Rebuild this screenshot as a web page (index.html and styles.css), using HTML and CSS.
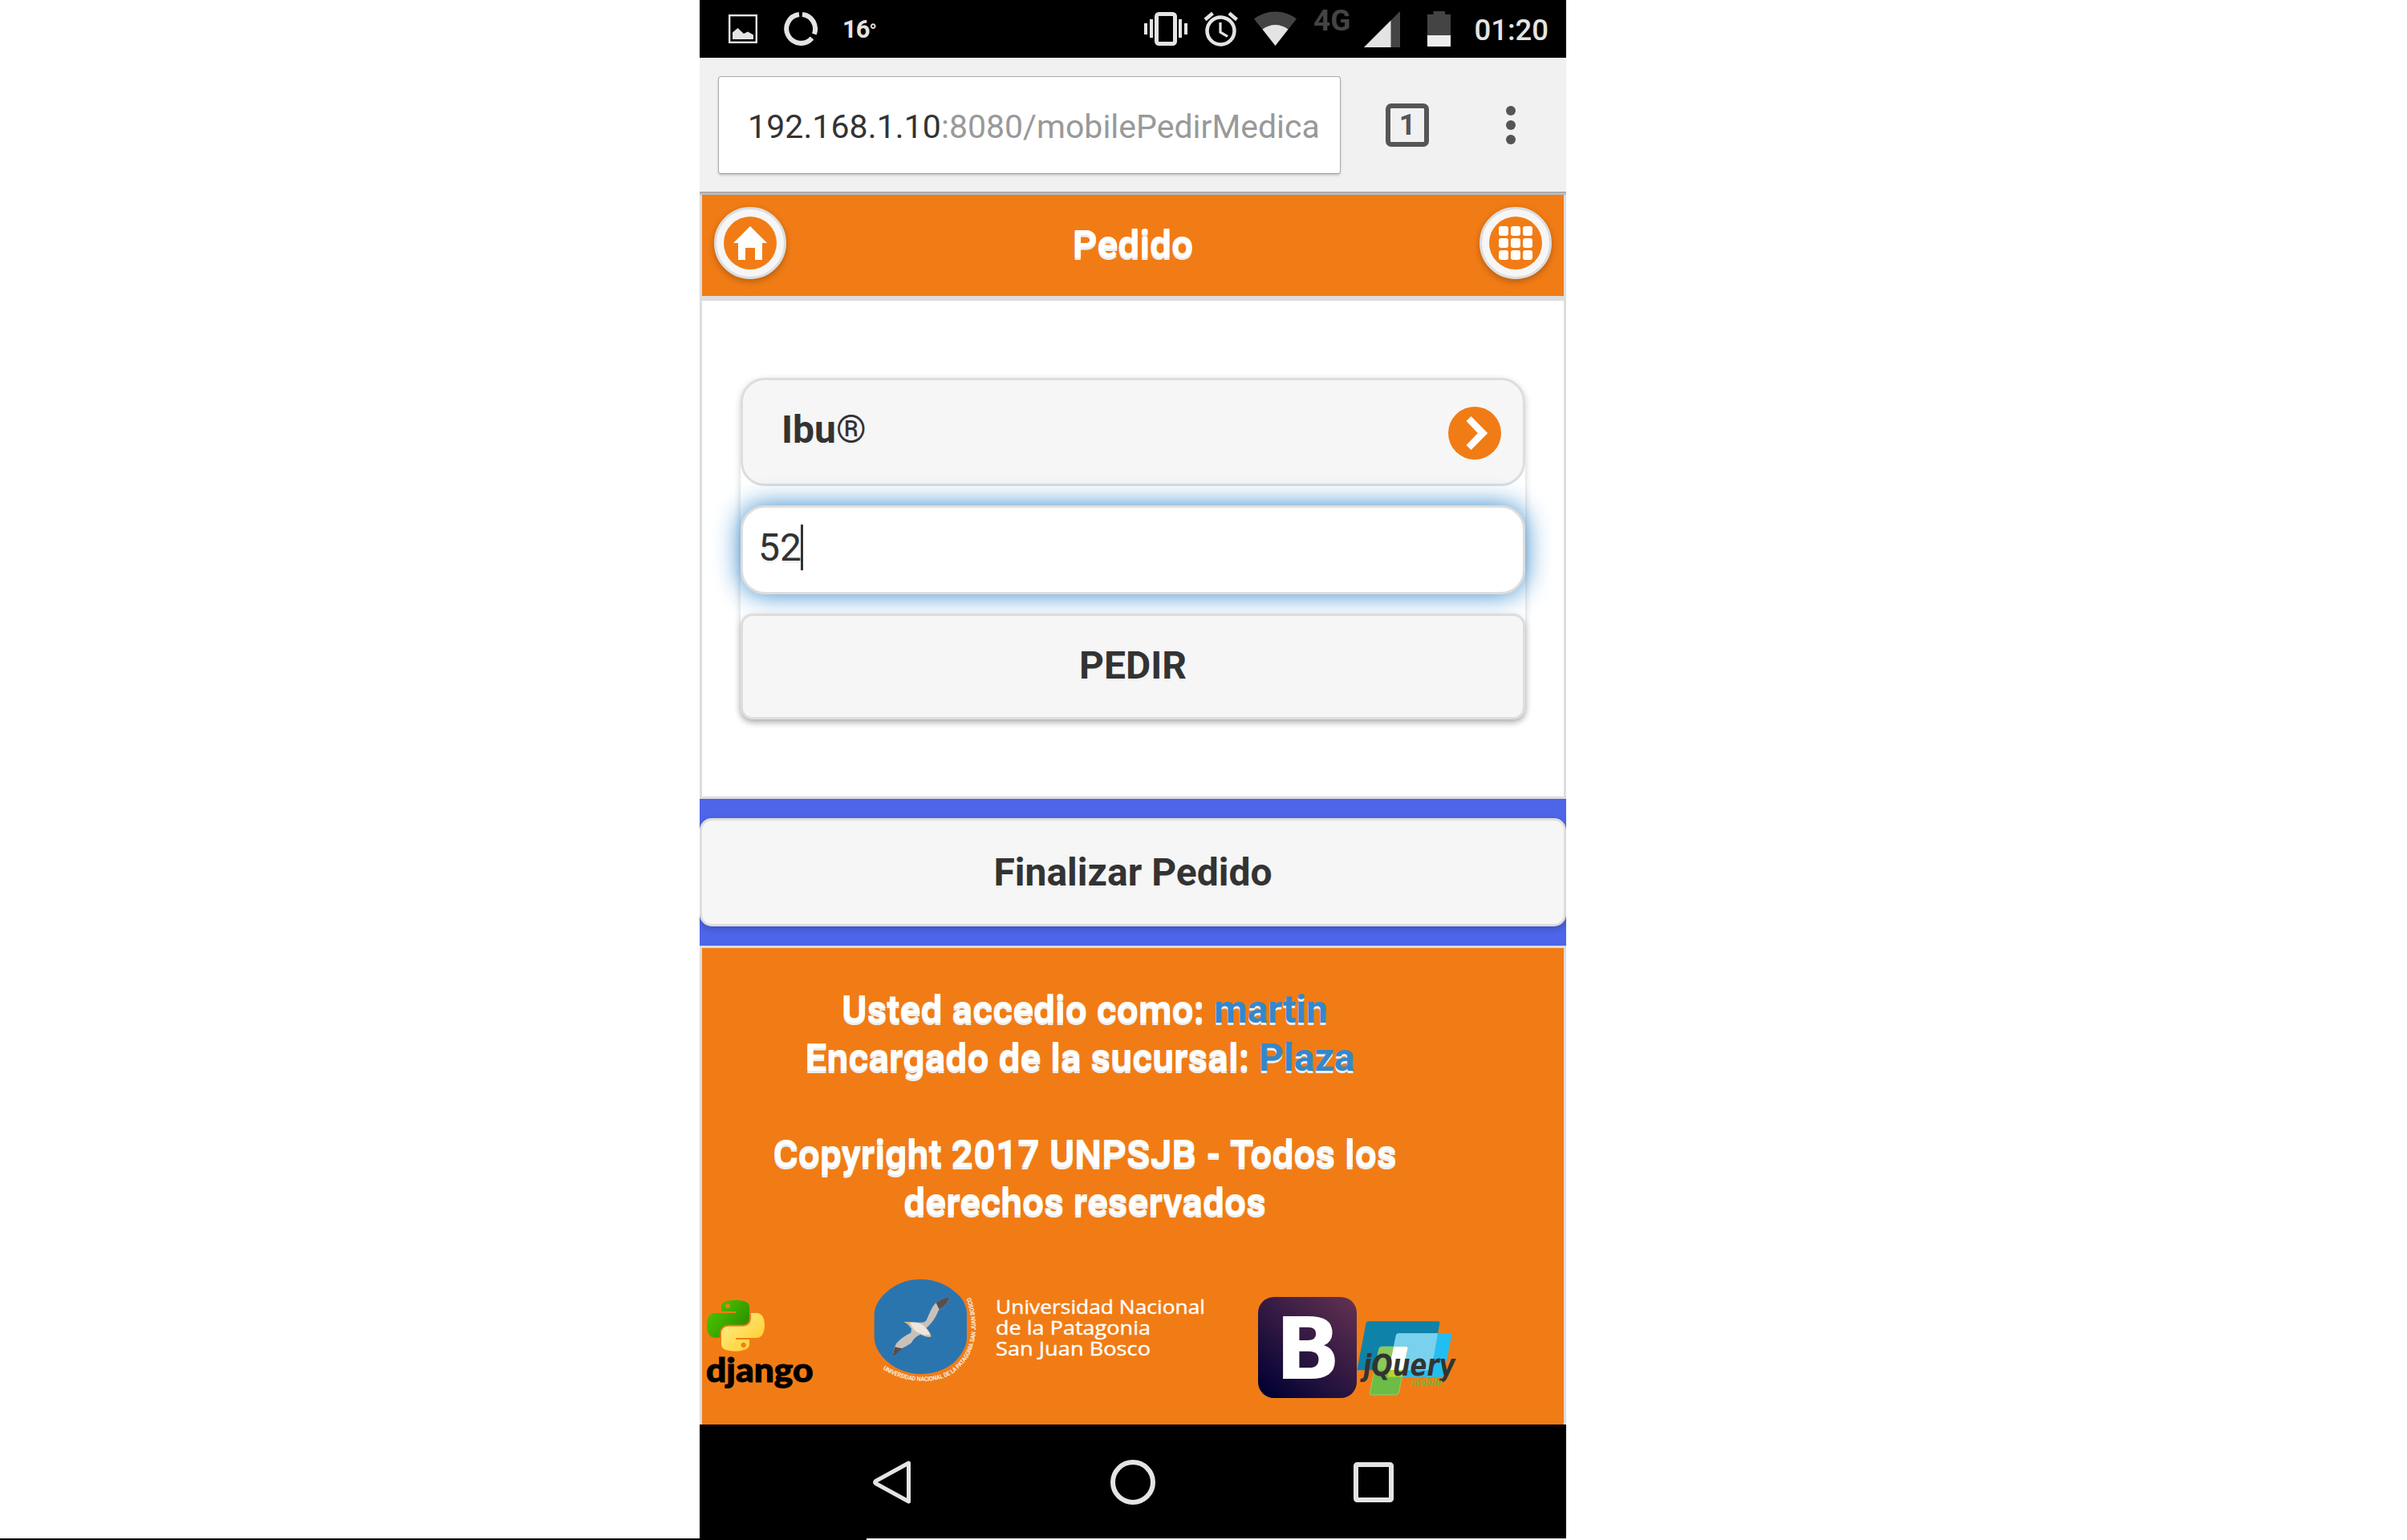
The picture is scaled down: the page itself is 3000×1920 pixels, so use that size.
FILE: index.html
```html
<!DOCTYPE html>
<html lang="es">
<head>
<meta charset="utf-8">
<title>Pedido</title>
<link rel="stylesheet" href="styles.css">
</head>
<body>
<main class="phone">
  <div class="status">
    <svg class="status-left" width="108" height="72" viewBox="900 0 140 72" preserveAspectRatio="xMinYMin slice">
      <rect x="909.2" y="19.2" width="33.6" height="33.6" fill="none" stroke="#e4e4e4" stroke-width="2.4"/>
      <path d="M913 49V40.500L919.500 35L927 42L932 39.500L939 43.500V49Z" fill="#e4e4e4"/>
    </svg>
    <svg class="status-ring" width="44" height="72" viewBox="976 0 44 72">
      <g fill="none" stroke="#e4e4e4" stroke-width="6"><path d="M1000 18A18 18 0 0 1 1014.800 42.500"/><path d="M1012 47.500A18 18 0 1 1 996 18"/></g>
    </svg>
    <span class="temp">16<span class="degree">°</span></span>
    <svg class="status-right" width="200" height="72" viewBox="1424 0 200 72">
      <g fill="#e4e4e4"><rect x="1426" y="29" width="4" height="14"/><rect x="1433" y="24" width="4" height="23"/><rect x="1469" y="24" width="4" height="23"/><rect x="1476" y="29" width="4" height="14"/></g>
      <rect x="1441.500" y="17.500" width="23" height="37" rx="3" fill="none" stroke="#e4e4e4" stroke-width="5"/>
      <g fill="none" stroke="#e4e4e4"><circle cx="1521.500" cy="38.500" r="17" stroke-width="4.500"/><path d="M1521 28V40L1530 45.500" stroke-width="3.200"/><path d="M1502 24.500L1511.500 16.500M1541.500 24.500L1532 16.500" stroke-width="4.500"/></g>
      <path d="M1589.500 57L1563 23.500Q1575 14.500 1589.500 14.500T1616 23.500Z" fill="#444"/>
      <path d="M1589.500 57L1573.500 36.500Q1581 31 1589.500 31T1605.500 36.500Z" fill="#e4e4e4"/>
    </svg>
    <span class="net">4G</span>
    <svg class="status-signal" width="112" height="72" viewBox="1698 0 112 72">
      <path d="M1745 14V59H1700Z" fill="#444"/><path d="M1733.500 25.500V59H1700Z" fill="#e4e4e4"/>
      <path d="M1779 18H1786.500V14H1801V18H1808V44H1779Z" fill="#444"/><path d="M1779 44H1808V58H1779Z" fill="#ececec"/>
    </svg>
    <span class="clock">01:20</span>
  </div>

  <div class="browser">
    <div class="url"><span class="host">192.168.1.10</span><span class="path">:8080/mobilePedirMedica</span></div>
    <div class="tabs">1</div>
    <svg class="dots" width="12" height="48" viewBox="0 0 12 48"><g fill="#555"><circle cx="6" cy="6" r="6"/><circle cx="6" cy="24" r="6"/><circle cx="6" cy="42" r="6"/></g></svg>
  </div>

  <header class="header">
    <a class="round"><span class="disc"><svg width="42" height="42" viewBox="0 0 14 14"><path d="M7 0L0 7H2V14H5V9H9V14H12V7H14Z" fill="#fff"/></svg></span></a>
    <h1 class="title">Pedido</h1>
    <a class="round"><span class="disc"><svg width="42" height="42" viewBox="0 0 14 14"><g fill="#fff"><rect width="4" height="4" rx="1"/><rect x="5" width="4" height="4" rx="1"/><rect x="10" width="4" height="4" rx="1"/><rect y="5" width="4" height="4" rx="1"/><rect x="5" y="5" width="4" height="4" rx="1"/><rect x="10" y="5" width="4" height="4" rx="1"/><rect y="10" width="4" height="4" rx="1"/><rect x="5" y="10" width="4" height="4" rx="1"/><rect x="10" y="10" width="4" height="4" rx="1"/></g></svg></span></a>
  </header>

  <section class="content">
    <div class="group">
      <div class="select"><span>Ibu<span class="reg">®</span></span><span class="disc"><svg width="42" height="42" viewBox="0 0 14 14"><path d="M5.500 0L3.500 2L8.300 7L3.500 12L5.500 14L12.400 7Z" fill="#fff"/></svg></span></div>
      <div class="input"><span>52</span><span class="caret"></span></div>
      <div class="button">PEDIR</div>
    </div>
  </section>

  <section class="finish"><div class="finish-button">Finalizar Pedido</div></section>

  <footer class="footer">
    <p class="credits">Usted accedio como: <a class="link">martin</a><br>Encargado de la sucursal: <a class="link">Plaza</a>&nbsp;<br><br>Copyright 2017 UNPSJB - Todos los<br>derechos reservados</p>
    <div class="logos">
      <svg class="django" width="150" height="160" viewBox="875 1590 150 160">
        <defs>
          <linearGradient id="green" x1="0" y1="0" x2="1" y2=".7"><stop offset="0" stop-color="#4fc800"/><stop offset=".4" stop-color="#44b400"/><stop offset=".9" stop-color="#2f9200"/></linearGradient>
          <linearGradient id="yellow" x1="0" y1="0" x2="1" y2="1"><stop offset=".3" stop-color="#ffe570"/><stop offset="1" stop-color="#ffc91f"/></linearGradient>
        </defs>
        <g transform="translate(860 1570) scale(.33333)">
          <path fill="url(#green)" fill-rule="evenodd" d="M117 201V176C117 160 138 153 170 153S222 160 222 178V221C222 236 211 245 196 245H145C126 245 112 258 112 276V293H92C72 293 63 274 63 247S72 201 92 201ZM141 166a9 9 0 1 0 .1 0ZM117 195H171V201H117Z"/>
          <path fill="url(#yellow)" fill-rule="evenodd" d="M228 201H249C270 201 279 222 279 247S270 294 249 294H171V300H222V319C222 335 202 344 170 344S117 337 117 319V276C117 261 129 251 145 251H196C216 251 228 239 228 221ZM200 311a9.500 9.500 0 1 0 .1 0Z"/>
          <path d="M117 195H171V201H112Z" fill="#f17c15"/>
          <text x="60" y="458" font-family="Lato, 'Open Sans', sans-serif" font-weight="900" font-size="124" textLength="401" lengthAdjust="spacingAndGlyphs" fill="#000" stroke="#000" stroke-width="3">django</text>
        </g>
      </svg>
      <svg class="unpsjb" width="430" height="160" viewBox="1080 1590 430 160">
        <g transform="translate(860 1570) scale(.33333)">
          <path fill="#2b75ae" d="M862 75C920 75 965 97 1000 130C1025 154 1035 180 1035 205V295C1035 325 1015 360 985 388C950 417 905 429 862 429S775 415 740 385C708 357 689 325 689 290V210C689 180 702 155 727 130C762 96 805 75 862 75Z"/>
          <path fill="#c9c1b9" d="M758 364C760 350 762 328 774 312C790 294 808 284 826 275L828 260C820 248 812 240 800 234C815 233 830 235 850 236C866 236 876 238 884 228C896 203 902 180 920 163C934 154 955 144 972 141C966 160 950 178 930 190C920 215 905 240 884 257C892 266 900 278 902 289C894 293 882 290 862 281C845 288 838 296 828 312C812 326 788 332 774 348Z"/>
          <path fill="#f0e5dc" d="M822 238C845 234 862 238 875 250C885 261 896 275 898 286C884 288 868 281 850 273C834 264 830 250 822 238Z"/>
          <path fill="#574f4e" d="M972 141C952 144 932 154 920 163L932 188C950 178 966 160 972 141ZM758 364C760 350 762 340 766 328L794 334C784 342 772 354 758 364Z"/>
          <path fill="#d9bf63" d="M800 233L824 236L818 243ZM880 282L902 285L896 292Z"/>
          <path id="arc" fill="none" d="M721 410C795 462 925 477 996 416C1070 355 1086 255 1049 140"/>
          <text font-family="Roboto, sans-serif" font-weight="500" font-size="23" fill="#fff"><textPath href="#arc" textLength="590" lengthAdjust="spacingAndGlyphs">UNIVERSIDAD NACIONAL DE LA PATAGONIA SAN JUAN BOSCO</textPath></text>
        </g>
        <g font-family="'Open Sans', 'Noto Sans', sans-serif" font-size="23.500" font-weight="500" fill="#fff" stroke="#fff" stroke-width=".4">
          <text x="1241" y="1638.300" textLength="261" lengthAdjust="spacingAndGlyphs">Universidad Nacional</text>
          <text x="1241" y="1664.300" textLength="193" lengthAdjust="spacingAndGlyphs">de la Patagonia</text>
          <text x="1241" y="1690" textLength="193" lengthAdjust="spacingAndGlyphs">San Juan Bosco</text>
        </g>
      </svg>
      <svg class="bootstrap" width="123" height="160" viewBox="1568 1590 123 160">
        <defs><linearGradient id="purple" x1=".1" y1="1" x2=".9" y2="0"><stop offset="0" stop-color="#000033"/><stop offset="1" stop-color="#603050"/></linearGradient></defs>
        <rect x="1568" y="1617" width="123" height="126" rx="20" fill="url(#purple)"/>
        <text x="1589.200" y="1719" font-family="'DejaVu Sans', sans-serif" font-weight="700" font-size="107.500" textLength="82" lengthAdjust="spacingAndGlyphs" fill="#fff">B</text>
      </svg>
      <svg class="jquery" width="130" height="160" viewBox="1691 1590 130 160">
        <g transform="translate(1530 1570) scale(.33333)">
          <path fill="#0e82a8" d="M528 232H787Q794 232 793 239L762 415H484L517 242Q519 232 528 232Z"/>
          <path fill="#22bef1" d="M640 277H832Q839 277 838 284L808 432Q806 440 798 440H598L629 287Q631 277 640 277Z"/>
          <path fill="#7ad1ee" d="M640 277H786L762 415H603L629 287Q631 277 640 277Z"/>
          <path fill="#6bbd45" stroke="#a5d98a" stroke-width="2" d="M577 327H667Q674 327 673 334L640 498Q638 507 629 507H538Q530 507 532 499L566 336Q568 327 577 327Z"/>
          <path fill="#8cc85a" d="M577 327H621L603 415H549L566 336Q568 327 577 327Z"/>
          <path fill="#fff" d="M621 327H667Q674 327 673 334L656 415H603Z"/>
          <path fill="#b5d433" d="M603 415H656L651 440H598Z"/>
          <text x="507" y="434" font-family="'DejaVu Sans', sans-serif" font-style="italic" font-weight="700" font-size="110" textLength="344" lengthAdjust="spacingAndGlyphs" fill="#333">jQuery</text>
          <text x="688" y="475" font-family="'Open Sans', sans-serif" font-style="italic" font-weight="700" font-size="37" textLength="116" lengthAdjust="spacingAndGlyphs" fill="#78b43c">mobile</text>
        </g>
      </svg>
    </div>
  </footer>

  <nav class="nav">
    <svg width="60" height="60" viewBox="0 0 60 60"><path d="M50.500 6V54L9.500 31.500Q7.500 30 9.500 28.500Z" fill="none" stroke="#e4e4e4" stroke-width="5" stroke-linejoin="round"/></svg>
    <svg width="60" height="60" viewBox="0 0 60 60"><circle cx="30" cy="30" r="25" fill="none" stroke="#e4e4e4" stroke-width="6"/></svg>
    <svg width="60" height="60" viewBox="0 0 60 60"><rect x="8" y="8" width="44" height="44" rx="1.500" fill="none" stroke="#e4e4e4" stroke-width="6"/></svg>
  </nav>
</main>
<div class="strip"></div>
</body>
</html>
```
FILE: styles.css
```css
* { box-sizing: border-box; }
body { margin: 0; width: 3000px; height: 1920px; background: #fff; overflow: hidden; font-family: Roboto, sans-serif; color: #333; }
svg { display: block; flex: none; overflow: visible; }
.phone { width: 1080px; height: 1918px; margin-left: 872px; display: flex; flex-direction: column; }
.phone > * { flex: none; }
.strip { width: 1080px; height: 2px; background: #000; }

.status { height: 72px; background: #000; color: #e4e4e4; display: flex; align-items: flex-start; padding-left: 28px; white-space: nowrap; }
.status-left { width: 76px; }
.temp { width: 374px; padding-left: 30px; font-size: 31px; line-height: 73px; font-weight: 700; letter-spacing: -1px; }
.degree { font-size: 24px; }
.status-ring { margin: 0; }
.status-right { margin-left: 30px; }
.net { width: 74px; padding-left: 13px; color: #444; font-size: 37px; line-height: 52px; font-weight: 700; }
.clock { padding-left: 27.5px; font-size: 36.5px; line-height: 75px; font-weight: 500; }

.browser { height: 171px; background: #f1f1f1; border-bottom: 3px solid #bbb; box-shadow: inset 0 -1px 0 #999; display: flex; align-items: center; padding: 0 0 12px 23px; }
.url { width: 776px; height: 122px; margin-top: 11px; padding-left: 36px; background: #fff; border: 1px solid #aaa; border-bottom-color: #999; border-radius: 4px; box-shadow: 0 2px 3px rgba(0,0,0,.15); font-size: 41px; line-height: 124px; white-space: nowrap; }
.host { letter-spacing: .1px; }
.path { color: #999; }
.tabs { width: 54px; height: 54px; margin: 12px 0 0 56px; border: 6px solid #555; border-radius: 7px; color: #555; font-size: 36px; line-height: 42px; font-weight: 700; text-align: center; }
.dots { margin: 12px 0 0 96px; }

.header { height: 132px; background: #f17c15; border: solid #ddd; border-width: 0 3px 6px; display: flex; justify-content: space-between; align-items: center; padding: 0 15px 6px; }
.round { width: 90px; height: 90px; border: 3px solid #ddd; border-radius: 50%; background: #f6f6f6; box-shadow: 0 3px 9px rgba(0,0,0,.25); display: flex; align-items: center; justify-content: center; }
.disc { width: 66px; height: 66px; border-radius: 50%; background: #f17c15; display: flex; align-items: center; justify-content: center; }
.title { margin: 0; padding-top: 3px; font-size: 48px; line-height: 60px; color: #fff; text-shadow: 0 3px 0 #eee; }

.content { height: 621px; border: solid #ddd; border-width: 0 3px 3px; padding: 96px 48px 0; }
.group { height: 426px; display: flex; flex-direction: column; justify-content: space-between; border-radius: 30px 30px 15px 15px; box-shadow: 0 3px 9px rgba(0,0,0,.2); font-size: 48px; text-shadow: 0 3px 0 #f3f3f3; }
.select, .input, .button { border: 3px solid #ddd; border-radius: 30px; display: flex; align-items: center; }
.select { height: 135px; background: #f6f6f6; font-weight: 700; padding: 0 27px 0 48px; justify-content: space-between; }
.select > span:first-child { padding-bottom: 6px; }
.reg { font-weight: 400; }
.select .disc { margin-top: 3px; }
.input { height: 111px; background: #fff; padding: 0 19px 6px; box-shadow: 0 0 33px #38c; }
.caret { width: 3px; height: 57px; background: #333; margin-left: -1px; }
.button { height: 132px; background: #f6f6f6; border-radius: 15px; font-weight: 700; justify-content: center; padding-bottom: 3px; box-shadow: 0 3px 9px rgba(0,0,0,.2); }

.finish { height: 183px; background: #4d65e9; padding: 24px 0; }
.finish-button { height: 135px; background: #f6f6f6; border: 3px solid #ddd; border-radius: 15px; box-shadow: 0 3px 9px rgba(0,0,0,.2); clip-path: inset(-20px 0); display: flex; align-items: center; justify-content: center; font-size: 48px; font-weight: 700; text-shadow: 0 3px 0 #f3f3f3; }

.footer { height: 597px; background: #f17c15; border: solid #ddd; border-width: 3px 3px 0; padding-top: 47px; }
.credits { width: 846px; margin: 0 0 0 54px; color: #fff; font-size: 48px; line-height: 60px; font-weight: 700; text-align: center; white-space: nowrap; text-shadow: 0 3px 0 #eee; }
.link { color: #38c; }
.logos { display: flex; margin-top: 61px; }
.unpsjb { margin-left: 55px; }
.bootstrap { margin-left: 58px; }

.nav { height: 142px; background: #000; display: flex; justify-content: space-between; align-items: center; padding: 2px 210px 0; }
```
